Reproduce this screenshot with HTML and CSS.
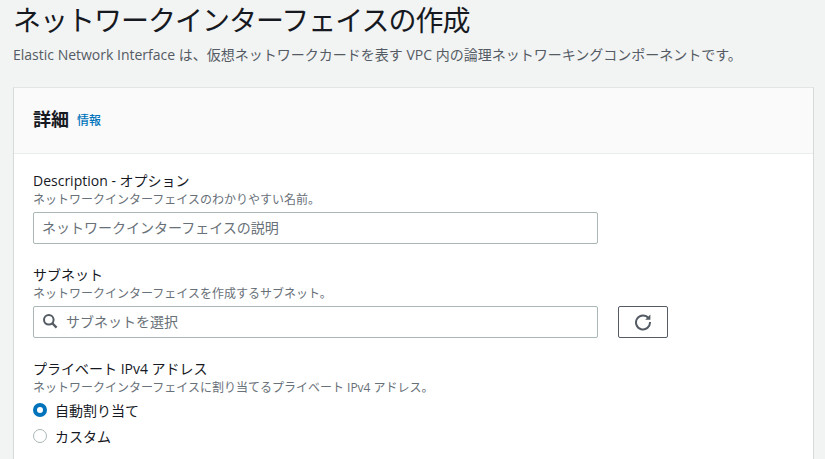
FILE: index.html
```html
<!DOCTYPE html>
<html lang="ja">
<head>
<meta charset="utf-8">
<title>ネットワークインターフェイスの作成</title>
<link rel="stylesheet" href="styles.css">
</head>
<body>
<main class="page">
  <h1 class="title">ネットワークインターフェイスの作成</h1>
  <p class="lead">Elastic Network Interface は、仮想ネットワークカードを表す VPC 内の論理ネットワーキングコンポーネントです。</p>
  <section class="panel">
    <header class="panel-head">
      <h2 class="panel-title">詳細</h2>
      <a class="info" href="#">情報</a>
    </header>
    <div class="panel-body">
      <div class="field">
        <div class="label">Description - オプション</div>
        <div class="hint">ネットワークインターフェイスのわかりやすい名前。</div>
        <div class="control">
          <div class="input">ネットワークインターフェイスの説明</div>
        </div>
      </div>
      <div class="field">
        <div class="label">サブネット</div>
        <div class="hint">ネットワークインターフェイスを作成するサブネット。</div>
        <div class="control">
          <div class="input input-search">
            <svg class="search-icon" width="16" height="16" viewBox="0 0 16 16" aria-hidden="true"><circle cx="6.8" cy="6.8" r="4.8" fill="none" stroke="#545b64" stroke-width="2"/><path d="M10.4 10.4 L14.6 14.6" stroke="#545b64" stroke-width="2.2" fill="none"/></svg>
            <span>サブネットを選択</span>
          </div>
          <button class="refresh" type="button" aria-label="更新">
            <svg width="18" height="18" viewBox="0 0 18 18" aria-hidden="true"><path d="M14.6 5.2 A7 7 0 1 0 16 9" fill="none" stroke="#545b64" stroke-width="2"/><path d="M16.4 1.6 V6.8 H11.2 Z" fill="#545b64"/></svg>
          </button>
        </div>
      </div>
      <div class="field">
        <div class="label">プライベート IPv4 アドレス</div>
        <div class="hint">ネットワークインターフェイスに割り当てるプライベート IPv4 アドレス。</div>
        <div class="radio-group">
          <div class="radio-row"><span class="radio radio-on"></span><span class="radio-text">自動割り当て</span></div>
          <div class="radio-row"><span class="radio"></span><span class="radio-text">カスタム</span></div>
        </div>
      </div>
    </div>
  </section>
</main>
</body>
</html>
```
FILE: styles.css
```css
html, body {
  margin: 0;
  padding: 0;
  height: 100%;
  overflow: hidden;
}
body {
  background: #f2f3f3;
  color: #16191f;
  font-family: "Open Sans", "Noto Sans CJK JP", sans-serif;
}
.page {
  box-sizing: border-box;
  height: 100%;
  display: flex;
  flex-direction: column;
  padding: 0 11px 0 13px;
}
.title {
  margin: -2px 0 0;
  font-size: 28px;
  font-weight: 400;
  line-height: 44px;
  height: 41px;
  letter-spacing: -1px;
}
.lead {
  margin: 0;
  padding-top: 6px;
  font-size: 14px;
  line-height: 20px;
  color: #545b64;
  height: 42px;
}
.panel {
  flex: 1;
  min-height: 0;
  background: #fff;
  border-top: 1px solid #e3e5e5;
  border-left: 1px solid #d5dbdb;
  border-right: 1px solid #d5dbdb;
}
.panel-head {
  display: flex;
  align-items: center;
  gap: 8px;
  height: 65px;
  padding: 0 19px;
  background: #fafafa;
  border-bottom: 1px solid #eaeded;
}
.panel-title {
  margin: -3px 0 0;
  font-size: 18px;
  font-weight: 700;
  line-height: 20px;
}
.info {
  font-size: 12px;
  line-height: 20px;
  color: #0073bb;
  font-weight: 500;
  text-decoration: none;
}
.panel-body {
  padding: 17px 19px 0;
  display: flex;
  flex-direction: column;
  gap: 21px;
}
.field {
  display: flex;
  flex-direction: column;
}
.label {
  font-size: 14px;
  line-height: 20px;
}
.hint {
  font-size: 12px;
  line-height: 17px;
  color: #687078;
}
.control {
  display: flex;
  gap: 20px;
  margin-top: 4px;
}
.input {
  box-sizing: border-box;
  width: 565px;
  height: 32px;
  display: flex;
  align-items: center;
  gap: 7px;
  padding: 0 8px 2px;
  border: 1px solid #aab7b8;
  border-radius: 2px;
  background: #fff;
  font-size: 14px;
  color: #687078;
}
.search-icon {
  flex: none;
  margin-right: 1px;
}
.refresh {
  box-sizing: border-box;
  width: 50px;
  height: 32px;
  padding: 0;
  display: flex;
  align-items: center;
  justify-content: center;
  background: #fff;
  border: 1px solid #545b64;
  border-radius: 2px;
}
.radio-group {
  margin-top: 1px;
}
.radio-row {
  display: flex;
  align-items: center;
  gap: 8px;
  height: 26px;
  font-size: 14px;
}
.radio {
  box-sizing: border-box;
  width: 14px;
  height: 14px;
  border-radius: 50%;
  border: 1px solid #aab7b8;
  background: #fff;
}
.radio-on {
  border: 4px solid #0073bb;
}
```
